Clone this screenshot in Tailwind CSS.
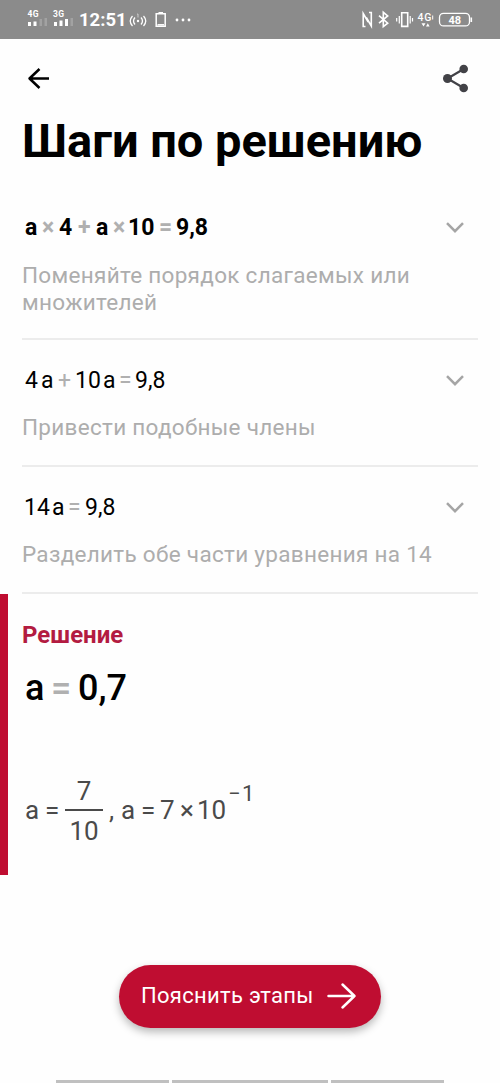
<!DOCTYPE html>
<html lang="ru">
<head>
<meta charset="utf-8">
<title>Шаги по решению</title>
<script src="https://cdn.jsdelivr.net/npm/@tailwindcss/browser@4"></script>
</head>
<body class="bg-[#fefefe]">
<div class="flex h-[1083px] w-[500px] flex-col overflow-hidden bg-[#fefefe] font-['Roboto',sans-serif] text-black">
  <!-- Status bar -->
  <div class="flex h-[39px] shrink-0 items-center bg-[#8b8b8b] text-white">
    <svg class="h-[39px] w-[76px]" viewBox="0 0 76 39" fill="#fff">
      <g font-family="Roboto" font-size="8.5" font-weight="700"><text x="27.5" y="17" textLength="11">4G</text><text x="53" y="17" textLength="11">3G</text></g>
      <path d="M28 22h3v4h-3zM33.500 21.500h3v4.500h-3zM54 22h3v4h-3zM59.500 20.500h3v5.500h-3zM65 19h3v7h-3z"/>
      <path d="M39.500 19h2.500v7h-2.500zM44.500 18h2.500v8h-2.500zM70.500 18h2.500v8h-2.500z" fill="#a2a2a2"/>
    </svg>
    <span class="ml-[3px] w-[47px] text-[18.5px] leading-[22px] font-bold mt-[1px]">12:51</span>
    <svg class="ml-[3px] h-[39px] w-[66px]" viewBox="0 0 66 39" fill="none" stroke="#fff" stroke-width="1.3">
      <path d="M3.500 16q-4.500 5 0 10M6 17.500q-3 3.500 0 7M12 17.500q3 3.500 0 7M14.500 16q4.500 5 0 10"/>
      <circle cx="9" cy="21" r="1.200" fill="#fff" stroke="none"/><path d="M9 14v3.500M8 14.500l1-.8" stroke-width="1" stroke="#ccc"/>
      <path d="M27.200 13.800h9v12.500h-9zM29.500 12.800h4.500" stroke-width="1.500"/><path d="M28.500 24.800h6.500" stroke-width="1.500"/>
      <g fill="#fff" stroke="none"><circle cx="48" cy="20" r="1.400"/><circle cx="54" cy="20" r="1.400"/><circle cx="60" cy="20" r="1.400"/></g>
    </svg>
    <svg class="ml-auto h-[39px] w-[140px]" viewBox="360 0 140 39" fill="none" stroke="#fff" stroke-width="1.600">
      <path d="M365.500 26.500h-2.300V13.500l5 8.500M369 12.500h2.300V26l-5-8.500"/>
      <path d="M379 15.700l8.700 7.500-4.400 3.500V12.300l4.400 3.600-8.700 7.300"/>
      <path d="M401.700 12.800h6v13.600h-6z"/><path d="M399.300 16v7.500M396.700 18v3.500M410.200 16v7.500M412.500 18v3.500" stroke-width="1.200"/>
      <text x="417.500" y="20.500" font-family="Roboto" font-size="10.500" font-weight="500" fill="#fff" stroke="none" textLength="14">4G</text>
      <path d="M432.700 15.500v4" stroke-width="1"/>
      <path d="M421.500 23.300h4l-2 3.300zM426 26.600h3.600l-1.800-3.300z" fill="#fff" stroke="none"/>
      <rect x="439.500" y="13.400" width="30" height="12.500" rx="4" stroke-width="1.300"/><path d="M471.300 17.500v4.500"/>
      <text x="454.700" y="23.700" text-anchor="middle" font-family="Roboto" font-size="11" font-weight="700" fill="#fff" stroke="none">48</text>
    </svg>
  </div>
  <!-- Navigation -->
  <div class="flex h-[74px] shrink-0 items-center justify-between pt-[3px] pr-[31px] pl-[27px]">
    <svg class="h-[24px] w-[24px]" viewBox="0 0 24 24" fill="none" stroke="#000" stroke-width="2.500" stroke-linecap="round" stroke-linejoin="round"><path d="M22 12.500H2.500M12.500 3l-10 9.500 10 9.500" stroke-linecap="butt"/></svg>
    <svg class="h-[30px] w-[28px]" viewBox="0 0 28 30" fill="#424247"><circle cx="6.500" cy="15.500" r="4.500"/><circle cx="22.700" cy="6" r="4.300"/><circle cx="22.700" cy="25" r="4.300"/><path d="M22.700 6L6.500 15.500l16.200 9.500" fill="none" stroke="#424247" stroke-width="2.200"/></svg>
  </div>
  <h1 class="h-[56px] shrink-0 pl-[22px] text-[47px] leading-[56px] font-bold whitespace-nowrap">Шаги по решению</h1>
  <!-- Steps -->
  <section class="mx-[22px] flex h-[171px] shrink-0 flex-col border-b-2 border-[#ececec] pt-[44px]">
    <div class="flex h-[30px] items-center justify-between pr-[13px]">
      <div class="flex pl-[3px] text-[23px] leading-[30px] font-bold whitespace-nowrap">
        <span class="w-[17px]">a</span><span class="w-[17px] text-[#b0b0b0]">×</span><span class="w-[19px]">4</span><span class="w-[18px] text-[#b0b0b0]">+</span><span class="w-[17px]">a</span><span class="w-[15px] text-[#b0b0b0]">×</span><span class="w-[31px]">10</span><span class="w-[17px] text-[#b0b0b0]">=</span><span>9,8</span>
      </div>
      <svg class="h-[12px] w-[20px]" viewBox="0 0 20 12" fill="none" stroke="#a5a5a5" stroke-width="2.500"><path d="M2 1.200l8 8 8-8"/></svg>
    </div>
    <p class="mt-[19px] text-[22.5px] leading-[26.500px] tracking-[0.3px] whitespace-nowrap text-[#adadad]">Поменяйте порядок слагаемых или<br>множителей</p>
  </section>
  <section class="mx-[22px] flex h-[126.500px] shrink-0 flex-col border-b-2 border-[#ececec] pt-[26px]">
    <div class="flex h-[30px] items-center justify-between pr-[13px]">
      <div class="flex pl-[3px] text-[23px] leading-[30px] whitespace-nowrap">
        <span class="w-[16px]">4</span><span class="w-[17px]">a</span><span class="w-[17px] text-[#b0b0b0]">+</span><span class="w-[28px]">10</span><span class="w-[16px]">a</span><span class="w-[16px] text-[#b0b0b0]">=</span><span>9,8</span>
      </div>
      <svg class="h-[12px] w-[20px]" viewBox="0 0 20 12" fill="none" stroke="#a5a5a5" stroke-width="2.500"><path d="M2 1.200l8 8 8-8"/></svg>
    </div>
    <p class="mt-[18px] text-[22.5px] leading-[26.500px] tracking-[0.3px] whitespace-nowrap text-[#adadad]">Привести подобные члены</p>
  </section>
  <section class="mx-[22px] flex h-[127px] shrink-0 flex-col border-b-2 border-[#ececec] pt-[26px]">
    <div class="flex h-[30px] items-center justify-between pr-[13px]">
      <div class="flex pl-[2px] text-[23px] leading-[30px] whitespace-nowrap">
        <span class="w-[28px]">14</span><span class="w-[16px]">a</span><span class="w-[17px] text-[#b0b0b0]">=</span><span>9,8</span>
      </div>
      <svg class="h-[12px] w-[20px]" viewBox="0 0 20 12" fill="none" stroke="#a5a5a5" stroke-width="2.500"><path d="M2 1.200l8 8 8-8"/></svg>
    </div>
    <p class="mt-[18px] text-[22.5px] leading-[26.500px] tracking-[0.3px] whitespace-nowrap text-[#adadad]">Разделить обе части уравнения на 14</p>
  </section>
  <!-- Solution -->
  <section class="flex h-[281px] shrink-0 flex-col border-l-8 border-[#bf0d31] pt-[26px] pl-[14px]">
    <h2 class="h-[30px] text-[24px] leading-[30px] font-bold text-[#b31b41]">Решение</h2>
    <div class="mt-[17px] flex pl-[3px] text-[36px] leading-[42px] font-medium">
      <span class="w-[26px]">a</span><span class="w-[27px] text-[#b0b0b0]">=</span><span>0,7</span>
    </div>
    <div class="mt-[67px] flex h-[68px] items-center pl-[3px] text-[26px] leading-[28px] whitespace-nowrap text-[#4a4a4a]">
      <span class="w-[20px]">a</span><span class="w-[20px]">=</span>
      <span class="flex w-[38px] flex-col items-center"><span class="h-[33px] pt-[1px]">7</span><span class="h-[2px] w-full bg-[#4a4a4a]"></span><span class="h-[33px] pt-[6px]">10</span></span>
      <span class="ml-[6px] w-[12px]">,</span><span class="w-[20px]">a</span><span class="w-[19px]">=</span><span class="w-[20px]">7</span><span class="w-[17px]">×</span><span class="w-[31px]">10</span>
      <span class="-mt-[32px] flex text-[22px]"><span class="w-[14px]">−</span><span>1</span></span>
    </div>
  </section>
  <!-- Explain button -->
  <button class="mx-auto mt-[90px] flex h-[63px] w-[262px] shrink-0 items-center rounded-full bg-[#bf0d31] pl-[22px] text-[22px] leading-[26px] whitespace-nowrap text-white shadow-[0_4px_8px_rgba(0,0,0,0.28)]">
    <span class="w-[186px] text-left tracking-[0.3px]">Пояснить этапы</span>
    <svg class="h-[28px] w-[30px]" viewBox="0 0 30 28" fill="none" stroke="#fff" stroke-width="2.500" stroke-linecap="round" stroke-linejoin="round"><path d="M1.500 14h26M15.500 2.500L27.500 14l-12 11.500"/></svg>
  </button>
  <!-- Bottom tabs -->
  <div class="mt-auto flex h-[3px] shrink-0 gap-[3px] pl-[56px]"><div class="w-[113px] bg-[#c0c0c0]"></div><div class="w-[156px] bg-[#c0c0c0]"></div><div class="w-[113px] bg-[#c0c0c0]"></div></div>
</div>
</body>
</html>
